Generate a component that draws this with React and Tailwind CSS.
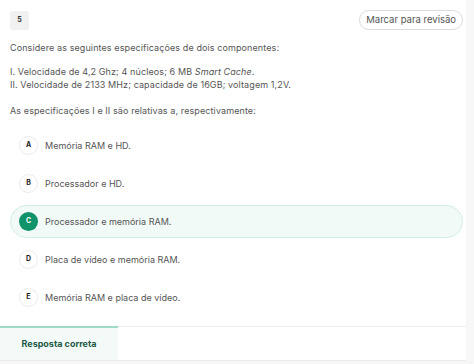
import React from "react";

const options = [
  { letter: "A", text: "Memória RAM e HD." },
  { letter: "B", text: "Processador e HD." },
  { letter: "C", text: "Processador e memória RAM.", selected: true },
  { letter: "D", text: "Placa de vídeo e memória RAM." },
  { letter: "E", text: "Memória RAM e placa de vídeo." },
];

export default function App() {
  return (
    <div
      className="w-[474px] h-[364px] bg-[#f7f7f7] overflow-hidden text-[#555]"
      style={{ fontFamily: "Inter, 'Open Sans', sans-serif" }}
    >
      <div className="w-[466px] bg-white">
        {/* header */}
        <div className="flex items-center justify-between pl-[10px] pr-[3px] pt-[10px]">
          <div className="w-[19px] h-[19px] rounded-[3px] bg-[#f1f1f1] flex items-center justify-center text-[7px] font-bold text-[#333]">
            5
          </div>
          <button className="h-[20px] px-[6px] rounded-full border border-[#dcdcdc] text-[9.5px] text-[#555]">
            Marcar para revisão
          </button>
        </div>

        {/* enunciado */}
        <div className="px-[10px] text-[9px] leading-[13px] tracking-[0.1px]">
          <p className="mt-[11px]">Considere as seguintes especificações de dois componentes:</p>
          <p className="mt-[11px]">
            I. Velocidade de 4,2 Ghz; 4 núcleos; 6 MB <em>Smart Cache</em>.
          </p>
          <p>II. Velocidade de 2133 MHz; capacidade de 16GB; voltagem 1,2V.</p>
          <p className="mt-[13px]">As especificações I e II são relativas a, respectivamente:</p>
        </div>

        {/* alternativas */}
        <div className="flex flex-col gap-[5px] pl-[10px] pr-[3px] mt-[12px] pb-[12px]">
          {options.map((o) => (
            <div
              key={o.letter}
              className={
                o.selected
                  ? "h-[33px] flex items-center gap-[7px] pl-[8px] rounded-full border border-[#d3eee5] bg-[#f1faf7]"
                  : "h-[33px] flex items-center gap-[7px] pl-[8px] rounded-full border border-transparent"
              }
            >
              <div
                className={
                  o.selected
                    ? "w-[19px] h-[19px] rounded-full bg-[#10936a] text-white flex items-center justify-center text-[7px] font-bold"
                    : "w-[19px] h-[19px] rounded-full border border-[#ececec] bg-white text-[#222] flex items-center justify-center text-[7px] font-bold"
                }
              >
                {o.letter}
              </div>
              <span className="text-[9px] text-[#555]">{o.text}</span>
            </div>
          ))}
        </div>
      </div>

      {/* abas */}
      <div className="w-[466px] flex border-t border-[#ececec] bg-white h-[35px] border-b">
        <div className="w-[118px] bg-[#f4faf8] border-t-2 border-[#9fdcc6] -mt-px flex items-center justify-center text-[9px] font-bold text-[#1e5a47]">
          Resposta correta
        </div>
      </div>
    </div>
  );
}
